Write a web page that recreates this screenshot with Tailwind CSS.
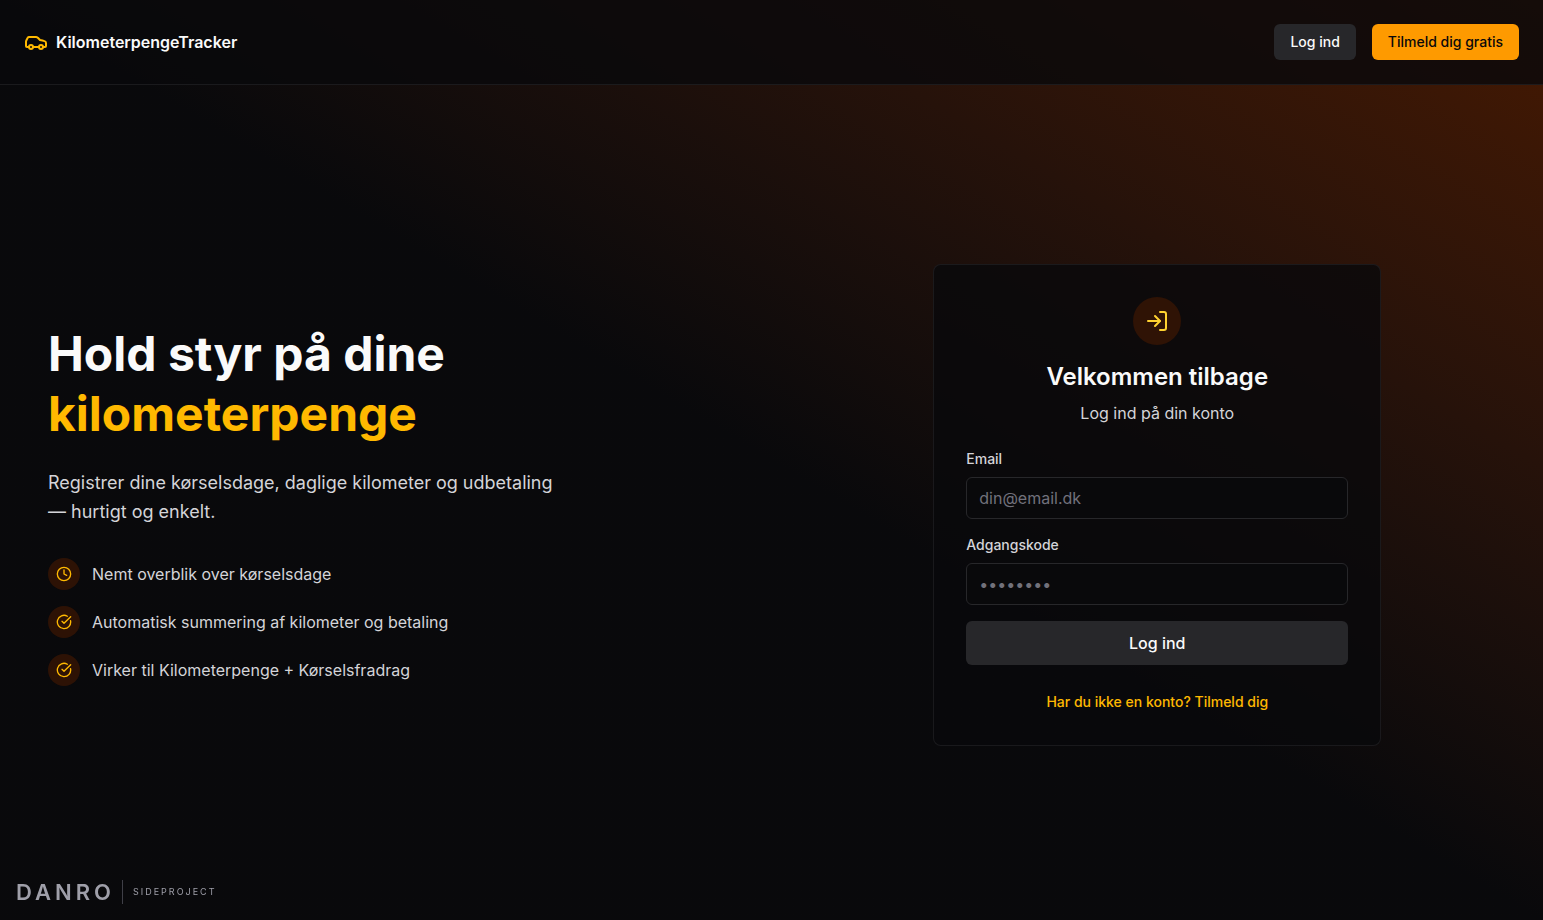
<!DOCTYPE html>
<html lang="da">
  <head>
    <meta charset="UTF-8" />
    <meta name="viewport" content="width=device-width, initial-scale=1.0" />
    <title>KilometerpengeTracker</title>
    <script src="https://cdn.jsdelivr.net/npm/@tailwindcss/browser@4"></script>
  </head>
  <body class="bg-zinc-950 font-['Inter',sans-serif] text-zinc-50 antialiased">
    <div class="flex min-h-screen flex-col bg-linear-to-bl from-amber-950 via-zinc-950 via-50% to-zinc-950">
      <header class="flex items-center justify-between border-b border-zinc-800/60 bg-zinc-950/80 p-6">
        <a href="#" class="flex items-center gap-2 font-semibold">
          <svg class="size-6 text-amber-400" viewBox="0 0 24 24" fill="none" stroke="currentColor" stroke-width="2" stroke-linecap="round" stroke-linejoin="round" aria-hidden="true">
            <path d="M19 17h2c.6 0 1-.4 1-1v-3c0-.9-.7-1.7-1.5-1.9C18.7 10.6 16 10 16 10s-1.3-1.4-2.2-2.3c-.5-.4-1.1-.7-1.8-.7H5c-.6 0-1.1.4-1.4.9l-1.4 2.9A3.7 3.7 0 0 0 2 12v4c0 .6.4 1 1 1h2" />
            <circle cx="7" cy="17" r="2" />
            <path d="M9 17h6" />
            <circle cx="17" cy="17" r="2" />
          </svg>
          <span>KilometerpengeTracker</span>
        </a>
        <nav class="flex items-center gap-4">
          <button type="button" class="rounded-md bg-zinc-800 px-4 py-2 text-sm font-medium text-zinc-50 hover:bg-zinc-700">
            Log ind
          </button>
          <button type="button" class="rounded-md bg-amber-500 px-4 py-2 text-sm font-medium text-zinc-950 hover:bg-amber-400">
            Tilmeld dig gratis
          </button>
        </nav>
      </header>

      <main class="grid flex-1 items-center pt-1 lg:grid-cols-2">
        <section class="px-12">
          <h1 class="text-5xl leading-[60px] font-bold">
            Hold styr på dine
            <span class="block text-amber-400">kilometerpenge</span>
          </h1>
          <p class="mt-6 max-w-lg text-lg leading-[29px] text-zinc-300">
            Registrer dine kørselsdage, daglige kilometer og udbetaling — hurtigt og enkelt.
          </p>
          <ul class="mt-8 space-y-4 text-zinc-300">
            <li class="flex items-center gap-3">
              <span class="flex size-8 items-center justify-center rounded-full bg-amber-950/60">
                <svg class="size-4 text-amber-400" viewBox="0 0 24 24" fill="none" stroke="currentColor" stroke-width="2" stroke-linecap="round" stroke-linejoin="round" aria-hidden="true">
                  <circle cx="12" cy="12" r="10" />
                  <polyline points="12 6 12 12 16 14" />
                </svg>
              </span>
              Nemt overblik over kørselsdage
            </li>
            <li class="flex items-center gap-3">
              <span class="flex size-8 items-center justify-center rounded-full bg-amber-950/60">
                <svg class="size-4 text-amber-400" viewBox="0 0 24 24" fill="none" stroke="currentColor" stroke-width="2" stroke-linecap="round" stroke-linejoin="round" aria-hidden="true">
                  <path d="M21.801 10A10 10 0 1 1 17 3.335" />
                  <path d="m9 11 3 3L22 4" />
                </svg>
              </span>
              Automatisk summering af kilometer og betaling
            </li>
            <li class="flex items-center gap-3">
              <span class="flex size-8 items-center justify-center rounded-full bg-amber-950/60">
                <svg class="size-4 text-amber-400" viewBox="0 0 24 24" fill="none" stroke="currentColor" stroke-width="2" stroke-linecap="round" stroke-linejoin="round" aria-hidden="true">
                  <path d="M21.801 10A10 10 0 1 1 17 3.335" />
                  <path d="m9 11 3 3L22 4" />
                </svg>
              </span>
              Virker til Kilometerpenge + Kørselsfradrag
            </li>
          </ul>
        </section>

        <section class="flex justify-center">
          <div class="w-full max-w-md rounded-lg border border-zinc-800/60 bg-zinc-950/80 p-8">
            <div class="text-center">
              <div class="mx-auto mb-4 flex size-12 items-center justify-center rounded-full bg-amber-950/60">
                <svg class="size-6 text-amber-300" viewBox="0 0 24 24" fill="none" stroke="currentColor" stroke-width="2" stroke-linecap="round" stroke-linejoin="round" aria-hidden="true">
                  <path d="M15 3h4a2 2 0 0 1 2 2v14a2 2 0 0 1-2 2h-4" />
                  <polyline points="10 17 15 12 10 7" />
                  <path d="M15 12H3" />
                </svg>
              </div>
              <h2 class="text-2xl font-semibold">Velkommen tilbage</h2>
              <p class="mt-2 text-zinc-300">Log ind på din konto</p>
            </div>

            <form class="mt-6 space-y-4">
              <div>
                <label for="email" class="mb-2 block text-sm font-medium text-zinc-300">Email</label>
                <input id="email" type="email" placeholder="din@email.dk" class="block w-full rounded-md border border-zinc-800 bg-zinc-950 px-3 py-2 placeholder:text-zinc-500" />
              </div>
              <div>
                <label for="password" class="mb-2 block text-sm font-medium text-zinc-300">Adgangskode</label>
                <input id="password" type="password" placeholder="••••••••" class="block w-full rounded-md border border-zinc-800 bg-zinc-950 px-3 py-2 placeholder:text-zinc-500" />
              </div>
              <button type="submit" class="h-11 w-full rounded-md bg-zinc-800 font-medium text-zinc-50 hover:bg-zinc-700">
                Log ind
              </button>
            </form>

            <div class="mt-6 text-center">
              <a href="#" class="text-sm font-medium text-amber-400 hover:text-amber-300">Har du ikke en konto? Tilmeld dig</a>
            </div>
          </div>
        </section>
      </main>
    </div>

    <!-- Badge i hjørnet -->
    <a href="#" class="fixed bottom-4 left-4 flex h-6 items-center">
      <span class="w-[106px] text-[22px] leading-6 font-semibold tracking-[4px] text-zinc-400">DANRO</span>
      <span class="h-6 w-px bg-zinc-700"></span>
      <span class="ml-[10px] text-[9px] tracking-[2px] text-zinc-400">SIDEPROJECT</span>
    </a>
  </body>
</html>
